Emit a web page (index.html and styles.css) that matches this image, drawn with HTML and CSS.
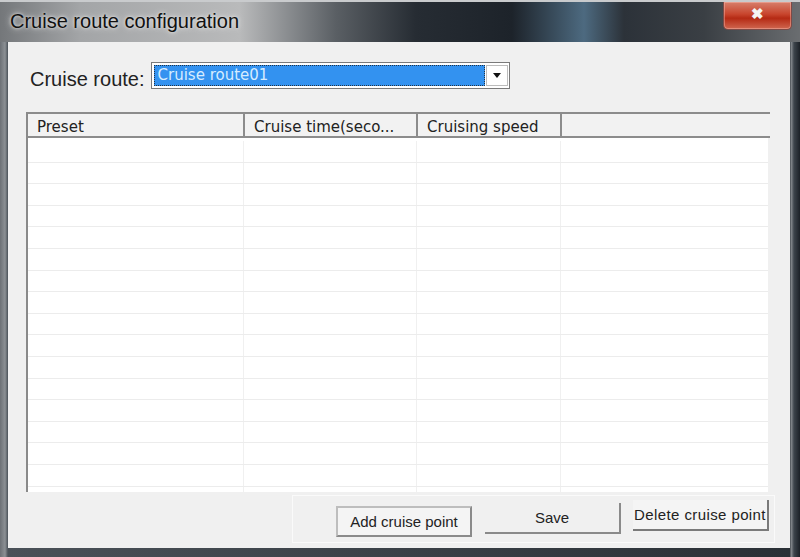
FILE: index.html
```html
<!DOCTYPE html>
<html lang="en">
<head>
    <meta charset="UTF-8">
    <title>Cruise route configuration</title>
    <link rel="stylesheet" href="styles.css">
</head>
<body>
    <div class="window">
        <div class="titlebar">
            <span class="title">Cruise route configuration</span>
            <span class="close-btn">&#10006;</span>
        </div>
        <div class="frame">
            <div class="client">
                <div class="route-row">
                    <span class="route-label">Cruise route:</span>
                    <div class="combo">
                        <span class="combo-value">Cruise route01</span>
                        <span class="combo-arrow"></span>
                    </div>
                </div>

                <div class="table">
                    <div class="table-head">
                        <span class="col c1">Preset</span>
                        <span class="col c2">Cruise time(seco...</span>
                        <span class="col c3">Cruising speed</span>
                        <span class="col c4"></span>
                    </div>
                    <div class="table-body" id="rows"></div>
                </div>

                <div class="actions">
                    <button class="btn btn-add">Add cruise point</button>
                    <button class="btn btn-save">Save</button>
                    <button class="btn btn-del">Delete cruise point</button>
                </div>
            </div>
        </div>
    </div>

    <script>
        // fill the empty grid rows
        const rows = document.getElementById('rows');
        for (let i = 0; i < 17; i++) {
            const row = document.createElement('div');
            row.className = 'row';
            row.innerHTML = '<span class="cell c1"></span><span class="cell c2"></span><span class="cell c3"></span><span class="cell c4"></span>';
            rows.appendChild(row);
        }
    </script>
</body>
</html>
```

FILE: styles.css
```css
body {
    margin: 0;
    font-family: "Liberation Sans", Arial, sans-serif;
    background: #1c2228;
    overflow: hidden;
}

.window {
    width: 800px;
    height: 557px;
    display: flex;
    flex-direction: column;
}

.titlebar {
    height: 42px;
    box-sizing: border-box;
    border-top: 2px solid #c9cbcd;
    display: flex;
    align-items: flex-start;
    justify-content: space-between;
    background: linear-gradient(90deg, #74777a 0, #a3a5a7 10%, #b9babb 30%, #5a5f64 42%, #262c33 52%, #1d232a 64%, #4d6a80 73%, #2c3239 78%, #3a3f44 88%, #6a6d70 100%);
}

.title {
    font-size: 20px;
    color: #111;
    margin: 8px 0 0 10px;
    text-shadow: 0 0 6px #e6e6e6, 0 0 3px #e6e6e6;
}

.close-btn {
    width: 69px;
    height: 28px;
    margin-right: 8px;
    box-sizing: border-box;
    border: 1px solid #7d4a46;
    border-top: none;
    border-radius: 0 0 5px 5px;
    background: linear-gradient(180deg, #d77f6c 0, #c8452d 45%, #b52a14 60%, #d0664f 100%);
    color: #f4f4f4;
    font-size: 15px;
    font-weight: bold;
    text-align: center;
    line-height: 24px;
    box-shadow: inset 0 0 0 1px rgba(255, 200, 190, 0.4);
}

.frame {
    flex: 1;
    display: flex;
    padding: 0 10px 9px 8px;
    background: linear-gradient(90deg, #6c7075 0, #8c9094 5px, #4a5158 8px, #2a3036 790px, #8a8e92 791px, #3d444b 794px, #1c2127 800px);
}

.client {
    flex: 1;
    background: #f0f0f0;
    display: flex;
    flex-direction: column;
    padding: 20px 0 0 18px;
}

.route-row {
    display: flex;
    align-items: flex-start;
    gap: 6px;
    margin-left: 4px;
}

.route-label {
    font-size: 20px;
    color: #222;
    padding-top: 6px;
}

.combo {
    width: 359px;
    height: 27px;
    box-sizing: border-box;
    border: 1px solid #7a7a7a;
    background: #fff;
    display: flex;
    align-items: center;
    padding: 2px 1px 2px 2px;
    gap: 1px;
}

.combo-value {
    flex: 1;
    height: 100%;
    background: #3392f0;
    color: #d6ecff;
    font-family: "DejaVu Sans", sans-serif;
    font-size: 15px;
    line-height: 20px;
    padding-left: 4px;
    outline: 1px dotted #234;
    outline-offset: -1px;
}

.combo-arrow {
    width: 22px;
    height: 100%;
    box-sizing: border-box;
    border: 1px solid #bcbcbc;
    display: flex;
    align-items: center;
    justify-content: center;
}

.combo-arrow::after {
    content: "";
    border-left: 4px solid transparent;
    border-right: 4px solid transparent;
    border-top: 5px solid #111;
}

.table {
    width: 744px;
    height: 380px;
    margin-top: 21px;
    box-sizing: border-box;
    border-left: 2px solid #8a8a8a;
    display: flex;
    flex-direction: column;
    overflow: hidden;
}

.table-head {
    display: flex;
    height: 27px;
    box-sizing: border-box;
    border-top: 2px solid #8c8c8c;
    border-bottom: 2px solid #8c8c8c;
    background: #f2f2f2;
}

.col {
    box-sizing: border-box;
    border-right: 2px solid #8c8c8c;
    font-family: "DejaVu Sans", sans-serif;
    font-size: 15px;
    color: #222;
    padding: 4px 0 0 9px;
    white-space: nowrap;
}

.c1 { width: 217px; }
.c2 { width: 173px; }
.c3 { width: 144px; }
.c4 { width: 208px; border-right: none; }

.table-body {
    flex: 1;
    background: #fff;
    margin-right: 2px;
    padding-top: 3px;
}

.row {
    display: flex;
    height: 21.6px;
    box-sizing: border-box;
    border-bottom: 1px solid #ececec;
}

.cell {
    box-sizing: border-box;
    border-right: 1px solid #f0f0f0;
}

.cell.c4 { border-right: none; }

.actions {
    align-self: flex-end;
    width: 483px;
    height: 48px;
    margin: 3px 15px 0 0;
    box-sizing: border-box;
    border: 1px solid #fafafa;
    display: flex;
    align-items: flex-start;
    padding-left: 43px;
}

.btn {
    flex: none;
    width: 136px;
    height: 31px;
    font-family: "Liberation Sans", Arial, sans-serif;
    font-size: 15px;
    color: #222;
    background: #f4f4f4;
    box-sizing: border-box;
    padding: 0;
}

.btn-add {
    margin-top: 10px;
    border: 2px solid #8a8a8a;
    border-top-color: #bdbdbd;
    border-left-color: #bdbdbd;
}

.btn-save {
    margin: 7px 0 0 13px;
    border: none;
    border-right: 2px solid #8a8a8a;
    border-bottom: 2px solid #8a8a8a;
    background: #f0f0f0;
}

.btn-del {
    margin: 4px 0 0 12px;
    border: none;
    border-right: 2px solid #7a7a7a;
    border-bottom: 2px solid #7a7a7a;
    letter-spacing: 0.4px;
    white-space: nowrap;
}
```
